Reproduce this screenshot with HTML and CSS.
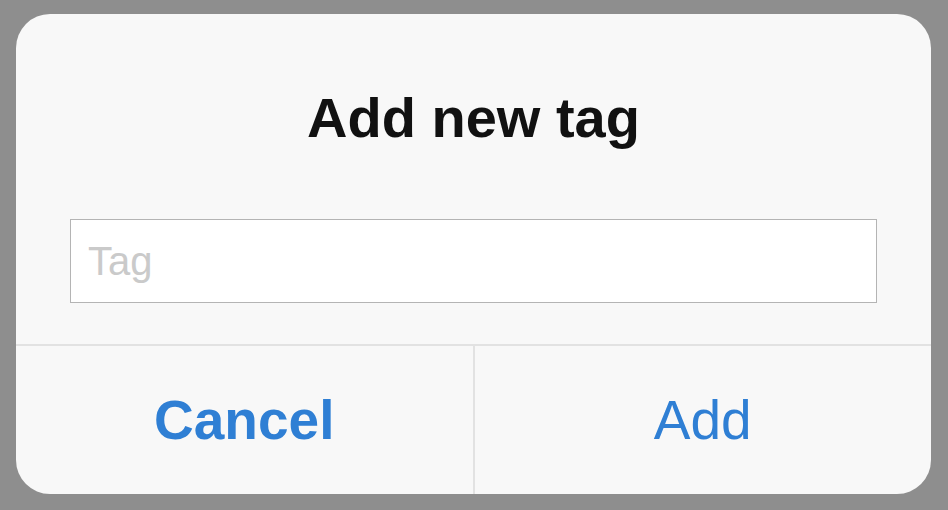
FILE: index.html
```html
<!DOCTYPE html>
<html>
<head>
<meta charset="utf-8">
<link rel="stylesheet" href="styles.css">
</head>
<body>
<div class="dialog">
  <div class="content">
    <h1 class="title">Add new tag</h1>
    <input class="field" type="text" placeholder="Tag">
  </div>
  <div class="actions">
    <button class="btn btn-cancel">Cancel</button>
    <button class="btn btn-add">Add</button>
  </div>
</div>
</body>
</html>
```
FILE: styles.css
```css
html, body {
  margin: 0;
  padding: 0;
  background: #8e8e8e;
}
body {
  width: 948px;
  height: 510px;
  padding: 14px 17px 16px 16px;
  box-sizing: border-box;
  font-family: "Liberation Sans", Arial, sans-serif;
}
.dialog {
  width: 915px;
  height: 480px;
  background: #f8f8f8;
  border-radius: 34px;
  display: flex;
  flex-direction: column;
  overflow: hidden;
}
.content {
  padding: 72px 54px 41px 54px;
  display: flex;
  flex-direction: column;
  border-bottom: 2px solid #e2e2e2;
}
.title {
  margin: 0 0 69px 0;
  font-size: 56px;
  line-height: 64px;
  font-weight: bold;
  color: #111;
  text-align: center;
}
.field {
  height: 84px;
  box-sizing: border-box;
  border: 1.5px solid #b4b4b4;
  background: #fff;
  padding: 0 0 0 17px;
  font-family: "Liberation Sans", Arial, sans-serif;
  font-size: 40px;
  color: #222;
  outline: none;
  margin: 0;
}
.field::placeholder {
  color: #cacaca;
}
.actions {
  flex: 1;
  display: flex;
}
.btn {
  flex: 1;
  border: none;
  background: transparent;
  font-family: "Liberation Sans", Arial, sans-serif;
  font-size: 55px;
  color: #2f7fd4;
  padding: 0;
  margin: 0;
}
.btn-cancel {
  font-weight: bold;
  border-right: 2px solid #e2e2e2;
}
```
